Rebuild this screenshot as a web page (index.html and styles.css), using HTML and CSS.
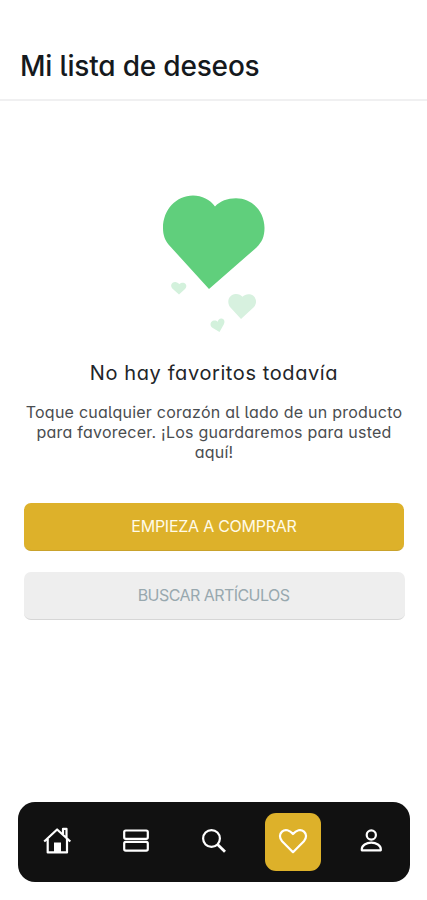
FILE: index.html
```
<!DOCTYPE html>
<html lang="es">
<head>
<meta charset="utf-8">
<meta name="viewport" content="width=device-width, initial-scale=1">
<title>Mi lista de deseos</title>
<link rel="stylesheet" href="styles.css">
</head>
<body>
<div class="screen">
  <header class="header"><h1 class="title">Mi lista de deseos</h1></header>
  <main class="content">
    <svg class="hearts" width="104" height="140" viewBox="162 194 104 140" aria-hidden="true">
      <path fill="#60cf7c" d="M209 289L168.500 244.500C165 240 163 235 163 228C163 209.500 176.500 195.500 193 195.500C202 195.500 210 199.500 215 206.500C220 201 227.500 198.200 236 198.200C252 198.200 264.500 211 264.500 228C264.500 236.500 262 242 256.500 247.500Z"/>
      <path fill="#d3f1dc" d="M179 294.500L172.300 288.500C169.500 285 172.500 281.500 176 282.200C177.500 282.500 178.500 283.300 179.300 284.200C180.500 282.800 182.500 282.300 184.200 283C187 284.300 186.800 287.200 185 289Z"/>
      <path fill="#d7f1df" d="M241 319L230 307C226 301 229.500 294.500 235.500 294C238.500 293.800 241 295 242.500 296.800C244.500 294.500 248 293.600 251 294.600C256.500 296.500 257.500 303 254 307Z"/>
      <path fill="#d3f1dc" d="M219.500 332L212 327.500C209.300 325 210.500 321 214 320.500C215.500 320.300 216.800 320.800 217.800 321.700C218 319.800 219.800 318.300 221.500 318.600C224.500 319 225 322 224 324Z"/>
    </svg>
    <h2 class="subtitle">No hay favoritos todavía</h2>
    <p class="hint"><span class="line">Toque cualquier corazón al lado de un producto</span> <span class="line">para favorecer. ¡Los guardaremos para usted</span> <span class="line">aquí!</span></p>
    <div class="actions">
      <button class="button primary">EMPIEZA A COMPRAR</button>
      <button class="button secondary">BUSCAR ARTÍCULOS</button>
    </div>
  </main>
  <nav class="nav">
    <a class="tab"><svg width="30" height="30" viewBox="0 0 30 30"><path d="M2.200 15.500L15.100 3.500L28.300 15.500M5.700 13V26.400H25V13M21 8V2.800H24.500V11.500"/><path class="solid" d="M12 26V16.500H19V26Z"/></svg></a>
    <a class="tab"><svg width="30" height="30" viewBox="0 0 30 30"><rect x="3.200" y="4.500" width="23.600" height="8.300" rx="1.500"/><rect x="3.200" y="15.900" width="23.600" height="8.700" rx="1.500"/></svg></a>
    <a class="tab"><svg width="30" height="30" viewBox="0 0 30 30"><circle cx="12.500" cy="12.500" r="8.400"/><path class="handle" d="M18.600 18.500L26 25.800"/></svg></a>
    <a class="tab"><span class="active"><svg width="30" height="30" viewBox="0 0 30 30"><path d="M15 26.200L4.100 15.200C1.200 12 1.300 8 4 5.600C7.200 2.900 11.700 4 15 8C18.300 4 22.800 2.900 26 5.600C28.700 8 28.800 12 25.900 15.200Z"/></svg></span></a>
    <a class="tab"><svg width="30" height="30" viewBox="0 0 30 30"><circle cx="15.300" cy="9" r="4.600"/><path d="M5.800 24.300V23C5.800 19.300 10.300 16.700 15.300 16.700S24.800 19.300 24.800 23V24.300Z"/></svg></a>
  </nav>
</div>
</body>
</html>
```
FILE: styles.css
```
* { box-sizing: border-box; }
body {
  margin: 0;
  background: #fff;
  font-family: Inter, "Noto Sans", sans-serif;
  font-feature-settings: "cv11", "cv05";
}
.screen {
  height: 900px;
  display: flex;
  flex-direction: column;
  overflow: hidden;
}
.header {
  height: 101px;
  padding: 48px 20px 0;
  border-bottom: 2px solid #f0f0f1;
}
.title {
  margin: 0;
  font-size: 28px;
  line-height: 36px;
  font-weight: 500;
  letter-spacing: -0.18px;
  color: #15191d;
  white-space: nowrap;
}
.content {
  flex: 1;
  display: flex;
  flex-direction: column;
  align-items: center;
  padding-top: 93px;
}
.hearts { display: block; flex: none; }
.subtitle {
  margin: 25px 0 0;
  padding-left: 1px;
  font-size: 20px;
  line-height: 28px;
  font-weight: 400;
  letter-spacing: 0.6px;
  color: #222529;
  white-space: nowrap;
}
.hint {
  margin: 15px 0 0;
  padding-left: 1px;
  font-size: 16px;
  line-height: 20px;
  letter-spacing: 0.24px;
  text-align: center;
  color: #4a4d50;
}
.line { display: block; white-space: nowrap; }
.actions {
  align-self: stretch;
  display: flex;
  flex-direction: column;
  gap: 21px;
  margin-top: 41px;
  padding: 0 22px 0 24px;
}
.button {
  height: 48px;
  padding: 0 0 2px;
  border: 0;
  border-radius: 7px;
  font: inherit;
  font-feature-settings: inherit;
  font-size: 16px;
  line-height: 20px;
}
.primary {
  margin-right: 1px;
  background: #ddb12a;
  border-bottom: 1px solid #c9a22c;
  color: #fffbe8;
  letter-spacing: -0.25px;
}
.secondary {
  padding-right: 2px;
  background: #eee;
  border-bottom: 1px solid #d6d6d6;
  color: #98a8ae;
  letter-spacing: -0.55px;
}
.nav {
  display: flex;
  height: 80px;
  margin: 0 17px 18px 18px;
  border-radius: 17px;
  background: #111;
}
.tab {
  flex: 1;
  display: flex;
  align-items: center;
  justify-content: center;
}
.tab svg {
  display: block;
  margin-bottom: 2px;
  fill: none;
  stroke: #fff;
  stroke-width: 2.200;
  stroke-linejoin: round;
}
.tab .solid { fill: #fff; stroke: none; }
.tab .handle { stroke-width: 2.800; }
.active {
  display: flex;
  align-items: center;
  justify-content: center;
  width: 56px;
  height: 58px;
  margin-left: 1px;
  border-radius: 11px;
  background: #ddb12a;
}
```
